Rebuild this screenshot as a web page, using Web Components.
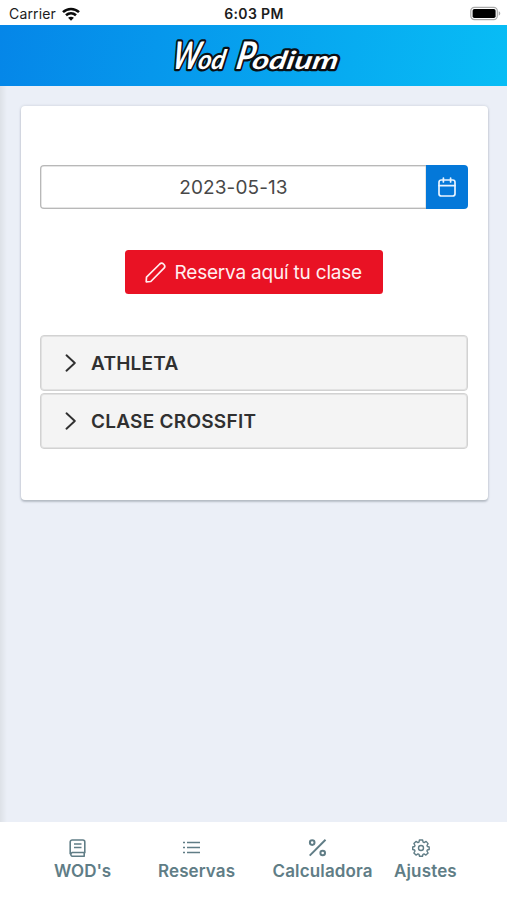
<!DOCTYPE html>
<html lang="es">
<head>
<meta charset="utf-8">
<title>Wod Podium</title>
<style>
html,body{margin:0;height:100%;overflow:hidden}
body{font-family:Inter,"Liberation Sans",sans-serif;background:#ebeff7}
</style>
</head>
<body>
<wod-app></wod-app>
<script>
const define = (name, html) => {
  const t = document.createElement('template');
  t.innerHTML = html;
  customElements.define(name, class extends HTMLElement {
    constructor() {
      super();
      this.attachShadow({mode: 'open'}).append(t.content.cloneNode(true));
    }
  });
};

define('status-bar', `
<style>
:host{display:grid;grid-template-columns:1fr auto 1fr;align-items:center;height:25px;box-sizing:border-box;padding:2px 6px 0 9px;background:#fff;color:#1c1c1c;font-size:14px;line-height:23px}
.left{display:flex;align-items:center;gap:6px}
.carrier{letter-spacing:.15px}
.time{font-weight:600;letter-spacing:.35px;margin-right:2px}
.bat{justify-self:end}
svg{display:block}
</style>
<div class="left"><span class="carrier">Carrier</span>
<svg width="18" height="14" viewBox="0 0 18 14" fill="none" stroke="#0b0b0b" stroke-width="2.6"><path d="M1 5.1C5.5.9 12.500.9 17 5.100M4 8.300c3-2.700 7-2.700 10 0"/><path d="M9 13.700 6.100 10.800c1.700-1.500 4.100-1.500 5.800 0z" fill="#0b0b0b" stroke="none"/></svg></div>
<span class="time">6:03 PM</span>
<svg class="bat" width="31" height="15" viewBox="0 0 31 15"><rect x=".8" y="1.300" width="26.500" height="12.300" rx="3.600" fill="#fff" stroke="#aaa" stroke-width="1.200"/><rect x="2.600" y="3" width="23" height="9" rx="1.800" fill="#000"/><path d="M28.700 5.300v4.400q1.600-.6 1.600-2.200t-1.600-2.200z" fill="#aaa"/></svg>`);

define('brand-header', `
<style>
:host{display:flex;justify-content:center;height:61px;background:linear-gradient(100deg,#0586e8,#08bdf5)}
svg{display:block}
text{font-family:Lato,sans-serif;font-style:italic;font-weight:bold;fill:#fff;stroke:#0a0f14;stroke-width:4.500px;stroke-linejoin:round;paint-order:stroke}
</style>
<svg width="180" height="61" viewBox="0 0 180 61">
<g transform="translate(7 43.500) skewX(-11)">
<text font-size="38" textLength="27" lengthAdjust="spacingAndGlyphs">W</text>
<text x="26" font-size="27" textLength="27" lengthAdjust="spacingAndGlyphs">od</text>
<text x="64" font-size="38" textLength="18" lengthAdjust="spacingAndGlyphs">P</text>
<text x="80" font-size="25" textLength="86" lengthAdjust="spacingAndGlyphs">odium</text></g></svg>`);

define('content-card', `
<style>
:host{display:flex;flex-direction:column;box-sizing:border-box;margin:20px 19px 0 21px;height:394px;padding:58.500px 20px 0 19px;background:#fff;border-radius:4px;box-shadow:0 2px 2px rgba(60,70,85,.25),0 0 3px rgba(60,70,85,.2)}
</style><slot></slot>`);

define('date-field', `
<style>
:host{display:flex;height:44px;color:#484848}
.v{flex:1;display:flex;align-items:center;justify-content:center;box-sizing:border-box;border:1.500px solid #b8b8b8;box-shadow:inset 0 0 0 .5px #ccc;border-right:0;border-radius:4px 0 0 4px;padding:1px 0 0 0;font-size:19px;letter-spacing:.1px}
.b{width:42px;display:grid;place-items:center;background:#0478d9;border-radius:0 4px 4px 0}
</style>
<div class="v"><slot></slot></div>
<div class="b"><svg width="18" height="20" viewBox="0 0 18 20" fill="none" stroke="#e9f4ff" stroke-width="1.700" stroke-linecap="round"><rect x="1" y="3" width="16" height="16" rx="2.300"/><path d="M1 8.600h16M5.400 1v4M12.600 1v4"/></svg></div>`);

define('book-button', `
<style>
:host{display:flex;align-items:center;box-sizing:border-box;width:258px;height:44px;margin:41px 0 0 85px;padding:1px 0 0 20px;gap:8.500px;border-radius:3.500px;background:#e91224;color:#ffeef0;font-size:19px;letter-spacing:-.2px;white-space:nowrap}
svg{display:block;flex:none}
</style>
<svg width="21" height="21" viewBox="0 0 21 21" fill="none" stroke="#ffeef0" stroke-width="1.700" stroke-linejoin="round"><path d="M1.200 19.800 1.500 15.200 14.800 2c2.500-2.300 6.500 1.600 4.200 4.200L5.800 19.500z"/></svg>
<slot></slot>`);

define('class-panel', `
<style>
:host{display:flex;align-items:center;box-sizing:border-box;height:56px;padding:0 0 0 24px;gap:14px;border:1px solid #d2d2d2;box-shadow:inset 0 0 0 1px #e2e2e2;border-radius:4px;background:#f4f4f4;color:#303030;font-size:19px;font-weight:600;letter-spacing:.25px;margin-bottom:2px}
svg{display:block}
</style>
<svg width="12" height="18" viewBox="0 0 12 18" fill="none" stroke="#303030" stroke-width="1.900" stroke-linecap="round" stroke-linejoin="round"><path d="m1.500 1.300 8.300 7.700-8.300 7.700"/></svg><slot></slot>`);

define('nav-item', `
<style>
:host{display:flex;flex-direction:column;color:#607d86;font-weight:600;font-size:17px;line-height:22px}
.i{height:21px;display:flex;padding-left:var(--inset)}
::slotted(svg){display:block;fill:none;stroke:currentColor;stroke-width:1.600}
</style>
<div class="i"><slot name="icon"></slot></div><div><slot></slot></div>`);

define('bottom-nav', `
<style>
:host{display:grid;grid-template-columns:104px 114.500px 121.500px auto;box-sizing:border-box;height:78px;padding:17px 0 0 54px;background:#fff}
</style><slot></slot>`);

define('wod-app', `
<style>
:host{display:flex;flex-direction:column;height:900px}
main{display:flow-root;flex:1;background:linear-gradient(90deg,#dde1e7,#ebeff7 7px)}
.list{margin-top:41.500px}
nav-item:nth-child(1){--inset:15px}
nav-item:nth-child(2){--inset:24px;letter-spacing:.1px}
nav-item:nth-child(3){--inset:35px;letter-spacing:.15px}
nav-item:nth-child(4){--inset:18px;letter-spacing:.15px}
</style>
<status-bar></status-bar>
<brand-header></brand-header>
<main><content-card>
<date-field>2023-05-13</date-field>
<book-button>Reserva aquí tu clase</book-button>
<div class="list"><class-panel>ATHLETA</class-panel><class-panel>CLASE CROSSFIT</class-panel></div>
</content-card></main>
<bottom-nav>
<nav-item><svg slot="icon" width="17" height="18" viewBox="0 0 17 18"><path d="M3.200 1H13.800a2 2 0 0 1 2 2V13.500H3.200a2 2 0 0 0 0 3.800H15.800M1.200 15.300V3a2 2 0 0 1 2-2M15.200 13.500v3.800M5 5h7.500M5 8.500h7.500"/></svg>WOD's</nav-item>
<nav-item><svg slot="icon" width="19" height="18" viewBox="0 0 19 18"><path d="M5 3.500h13M5 8.500h13M5 13.500h13M1 3.500h2M1 8.500h2M1 13.500h2"/></svg>Reservas</nav-item>
<nav-item><svg slot="icon" width="19" height="18" viewBox="0 0 19 18"><g stroke-width="2"><circle cx="4.200" cy="3.600" r="2.300"/><circle cx="14.700" cy="14" r="2.300"/><path d="M17.500 .8 1.700 16.600"/></g></svg>Calculadora</nav-item>
<nav-item><svg slot="icon" width="18" height="18" viewBox="0 0 18 18"><g stroke-width="1.400" stroke-linejoin="round"><circle cx="9" cy="9" r="2.500"/><path d="M7.400 1h3.200l.5 2.200 1 .4 2-1.200 2 2.200-1.100 1.900.4 1L17.200 8v2.500l-1.900.5-.4 1 1.200 2-2.200 2.100-1.900-1.200-1 .4-.5 1.900H7.500L7 15.300l-1-.4-2 1.200L1.900 14 3 12l-.4-1-1.900-.5V8l1.900-.5.4-1-1.100-2L4 2.400l2 1.200 1-.4z"/></g></svg>Ajustes</nav-item>
</bottom-nav>`);
</script>
</body>
</html>
